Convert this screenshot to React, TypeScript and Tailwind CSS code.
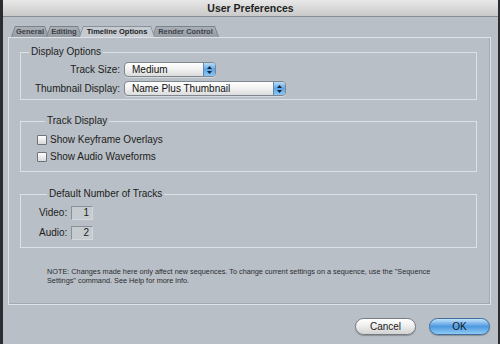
const TABS = [
  { label: "General", w: "w-[38px]", active: false },
  { label: "Editing", w: "w-[36px]", active: false },
  { label: "Timeline Options", w: "w-[76px]", active: true },
  { label: "Render Control", w: "w-[67px]", active: false },
];

function Tab({ label, w, active }: { label: string; w: string; active: boolean }) {
  return (
    <div
      className={`${w} h-[11px] -mr-[3px] p-[1px] pb-0 ${active ? "relative z-10 bg-[#8b9198]" : "bg-[#7c828a]"} [clip-path:polygon(4px_0,calc(100%-4px)_0,100%_100%,0_100%)]`}
    >
      <div
        className={`flex h-full items-center justify-center text-[7.5px] font-bold leading-none ${active ? "bg-[#c6cbd1] text-[#222]" : "bg-gradient-to-b from-[#a9afb6] to-[#979da4] text-[#3d4147]"} [clip-path:polygon(3.5px_0,calc(100%-3.5px)_0,100%_100%,0_100%)]`}
      >
        {label}
      </div>
    </div>
  );
}

function Popup({ value, w }: { value: string; w: string }) {
  return (
    <div className={`${w} flex h-[15px] overflow-hidden rounded-[4px] border border-[#80868d] bg-gradient-to-b from-[#ffffff] via-[#f1f1f1] to-[#dcdcdc] shadow-[0_1px_0_rgba(255,255,255,0.4)]`}>
      <div className="flex flex-1 items-center pl-[7px] text-[10px] leading-none text-[#111]">{value}</div>
      <div className="flex w-[12px] flex-col items-center justify-center gap-[2px] border-l border-[#5f87b3] bg-gradient-to-b from-[#b8dcf7] via-[#5fa6e6] to-[#8cc6f2]">
        <svg width="5" height="3" viewBox="0 0 5 3">
          <path d="M0 3 L2.5 0 L5 3 Z" fill="#10243a" />
        </svg>
        <svg width="5" height="3" viewBox="0 0 5 3">
          <path d="M0 0 L2.5 3 L5 0 Z" fill="#10243a" />
        </svg>
      </div>
    </div>
  );
}

function Checkbox({ label }: { label: string }) {
  return (
    <div className="flex h-[13px] items-center gap-[3px]">
      <div className="h-[10px] w-[10px] rounded-[1px] border border-[#6f747a] bg-gradient-to-b from-[#ffffff] to-[#d9d9d9]" />
      <span className="text-[10px] leading-none text-[#1b1d20]">{label}</span>
    </div>
  );
}

function NumberField({ label, value }: { label: string; value: string }) {
  return (
    <div className="flex h-[14px] items-center gap-[2px]">
      <span className="w-[30px] text-[10px] leading-none text-[#1b1d20]">{label}</span>
      <div className="flex h-[14px] w-[22px] items-center justify-end border border-[#8b9097] border-b-[#d4d8dc] border-r-[#d4d8dc] bg-[#c6cbd0] pr-[3px] text-[10px] leading-none text-[#1b1d20]">
        {value}
      </div>
    </div>
  );
}

function Group({ title, className, children }: { title: string; className: string; children: React.ReactNode }) {
  return (
    <fieldset className={`border border-[#dde1e5] ${className}`}>
      <legend className="ml-[8px] px-[2px] text-[10px] leading-[12px] text-[#1b1d20]">{title}</legend>
      {children}
    </fieldset>
  );
}

export default function App() {
  return (
    <div className="flex h-[344px] w-[500px] flex-col overflow-hidden border-r-[2px] border-l-[3px] border-[#2b2d30] bg-[#b9bfc6] font-['Liberation_Sans',Arial,sans-serif]">
      <div className="flex h-[17px] shrink-0 items-center justify-center border-b border-[#8a8d91] bg-gradient-to-b from-[#e8e8e8] to-[#c9c9c9] text-[10.5px] font-bold leading-none text-[#1f1f1f]">
        User Preferences
      </div>

      <div className="mt-[9px] flex pl-[8px]">
        {TABS.map((t) => (
          <Tab key={t.label} {...t} />
        ))}
      </div>

      <div className="ml-[5px] mr-[7px] h-[268px] shrink-0 border border-[#dfe3e7] pl-[11px] pr-[13px] shadow-[inset_-1px_-1px_0_#a3a9b0]">
        <Group title="Display Options" className="mt-[8px] pb-[3px]">
          <div className="mt-[4px] grid grid-cols-[99px_auto] items-center gap-x-[4px] gap-y-[4px] text-[10px] leading-none text-[#1b1d20]">
            <span className="text-right">Track Size:</span>
            <Popup value="Medium" w="w-[92px]" />
            <span className="text-right">Thumbnail Display:</span>
            <Popup value="Name Plus Thumbnail" w="w-[162px]" />
          </div>
        </Group>

        <Group title="Track Display" className="mt-[15px] pb-[8px] pl-[16px]">
          <div className="mt-[6px] flex flex-col gap-[4px]">
            <Checkbox label="Show Keyframe Overlays" />
            <Checkbox label="Show Audio Waveforms" />
          </div>
        </Group>

        <Group title="Default Number of Tracks" className="mt-[16px] pb-[7px] pl-[18px]">
          <div className="mt-[6px] flex flex-col gap-[6px]">
            <NumberField label="Video:" value="1" />
            <NumberField label="Audio:" value="2" />
          </div>
        </Group>

        <p className="ml-[27px] mt-[19px] text-[7.3px] leading-[9px] text-[#2a2d31]">
          NOTE: Changes made here only affect new sequences. To change current settings on a sequence, use the "Sequence
          <br />
          Settings" command. See Help for more info.
        </p>
      </div>

      <div className="mt-[13px] flex justify-end gap-[13px] pr-[8px]">
        <button className="h-[17px] w-[61px] rounded-full border border-[#777c82] bg-gradient-to-b from-[#ffffff] via-[#ececec] to-[#d2d2d2] text-[10px] leading-none text-[#1b1b1b] shadow-[0_1px_1px_rgba(0,0,0,0.25)]">
          Cancel
        </button>
        <button className="h-[17px] w-[61px] rounded-full border border-[#3f6e9e] bg-gradient-to-b from-[#c4e3fb] via-[#4c9ae0] to-[#8fcaf5] text-[10px] leading-none text-[#0d1b2a] shadow-[0_1px_1px_rgba(0,0,0,0.25)]">
          OK
        </button>
      </div>
    </div>
  );
}
